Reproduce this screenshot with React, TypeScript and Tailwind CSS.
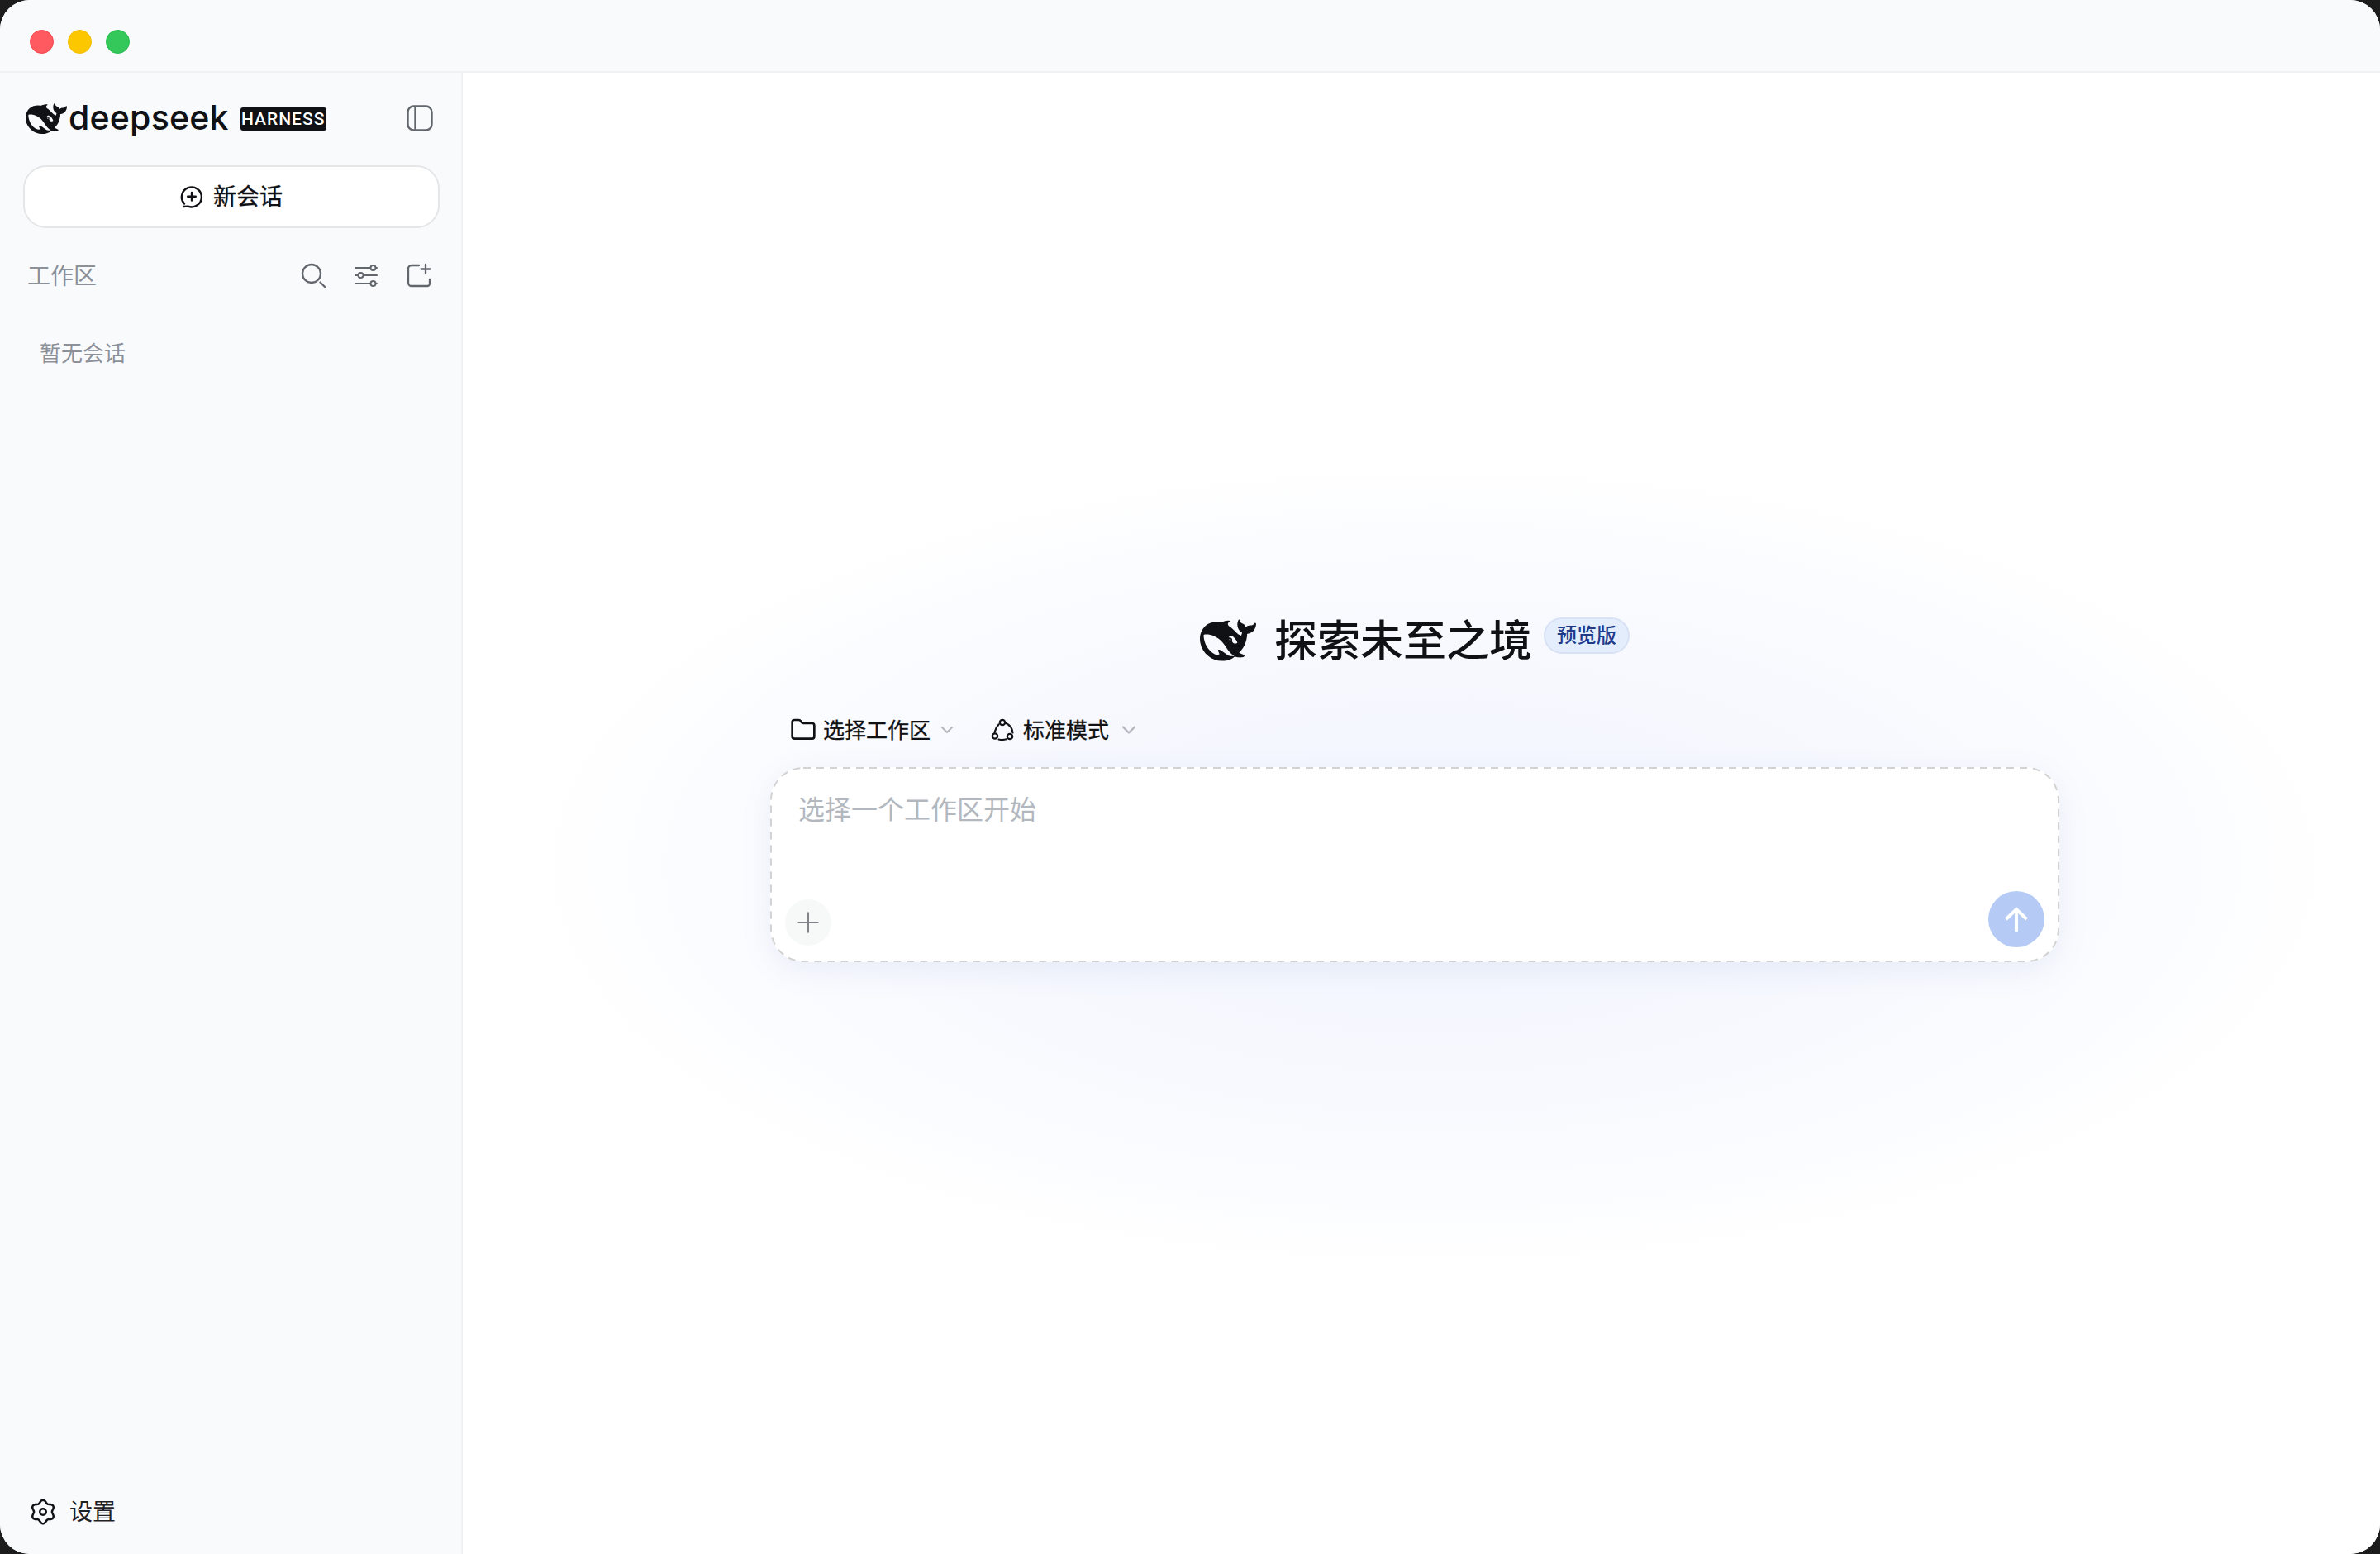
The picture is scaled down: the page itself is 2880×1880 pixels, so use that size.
import { ChevronDown, Folder, Plus } from 'lucide-react';

const CJK = "font-['Inter','Noto_Sans_CJK_SC',sans-serif]";

const Whale = ({ className }: { className: string }) => (
  <svg viewBox="0 0 24 24" className={className} fill="#101114">
    <path d="M23.748 4.482c-.254-.124-.364.113-.512.234-.051.039-.094.09-.137.136-.372.397-.806.657-1.373.626-.829-.046-1.537.214-2.163.848-.133-.782-.575-1.248-1.247-1.548-.352-.156-.708-.311-.955-.65-.172-.241-.219-.51-.305-.774-.055-.16-.11-.323-.293-.35-.2-.031-.278.136-.356.276-.313.572-.434 1.202-.422 1.84.027 1.436.633 2.58 1.838 3.393.137.093.172.187.129.323-.082.28-.18.552-.266.833-.055.179-.137.217-.329.14a5.526 5.526 0 01-1.736-1.18c-.857-.828-1.631-1.742-2.597-2.458a11.365 11.365 0 00-.689-.471c-.985-.957.13-1.743.388-1.836.27-.098.093-.432-.779-.428-.872.004-1.67.295-2.687.684a3.055 3.055 0 01-.465.137 9.597 9.597 0 00-2.883-.102c-1.885.21-3.39 1.102-4.497 2.623C.082 8.606-.231 10.684.152 12.85c.403 2.284 1.569 4.175 3.36 5.653 1.858 1.533 3.997 2.284 6.438 2.14 1.482-.085 3.133-.284 4.994-1.86.47.234.962.327 1.78.397.63.059 1.236-.03 1.705-.128.735-.156.684-.837.419-.961-2.155-1.004-1.682-.595-2.113-.926 1.096-1.296 2.746-2.642 3.392-7.003.05-.347.007-.565 0-.845-.004-.17.035-.237.23-.256a4.173 4.173 0 001.545-.475c1.396-.763 1.96-2.015 2.093-3.517.02-.23-.004-.467-.247-.588zM11.581 18c-2.089-1.642-3.102-2.183-3.52-2.16-.392.024-.321.471-.235.763.09.288.207.486.371.739.114.167.192.416-.113.603-.673.416-1.842-.14-1.897-.167-1.361-.802-2.5-1.86-3.301-3.307-.774-1.393-1.224-2.887-1.298-4.482-.02-.386.093-.522.477-.592a4.696 4.696 0 011.529-.039c2.132.312 3.946 1.265 5.468 2.774.868.86 1.525 1.887 2.202 2.891.72 1.066 1.494 2.082 2.48 2.914.348.292.625.514.891.677-.802.09-2.14.11-3.054-.614zm1-6.44a.306.306 0 01.415-.287.302.302 0 01.2.288.306.306 0 01-.31.307.303.303 0 01-.304-.308zm3.11 1.596c-.2.081-.399.151-.59.16a1.245 1.245 0 01-.798-.254c-.274-.23-.47-.358-.552-.758a1.73 1.73 0 01.016-.588c.07-.327-.008-.537-.239-.727-.187-.156-.426-.199-.688-.199a.559.559 0 01-.254-.078c-.11-.054-.2-.19-.114-.358.028-.054.16-.186.192-.21.356-.202.767-.136 1.146.016.352.144.618.408 1.001.782.391.451.462.576.685.914.176.265.336.537.445.848.067.195-.019.354-.25.452z" />
  </svg>
);

const PanelIcon = () => (
  <svg viewBox="0 0 32 32" className="w-8 h-8" fill="none" stroke="#62666d" strokeWidth="2.4">
    <rect x="1.5" y="1.5" width="29" height="29" rx="7" />
    <path d="M10.5 2v28" />
  </svg>
);

const ChatPlusIcon = () => (
  <svg viewBox="0 0 28 28" className="w-7 h-7" fill="none" stroke="#101114" strokeWidth="2.4" strokeLinecap="round">
    <path d="M5 22.5A12 12 0 1 1 9.5 25.6L4 26" />
    <path d="M14 9v9.500M9.200 13.800h9.600" />
  </svg>
);

const SearchIcon = () => (
  <svg viewBox="0 0 30 30" className="w-[30px] h-[30px]" fill="none" stroke="#62666d" strokeWidth="2.3" strokeLinecap="round">
    <circle cx="13" cy="13" r="11" />
    <path d="M23.500 23.500L29 29" />
  </svg>
);

const SlidersIcon = () => (
  <svg viewBox="0 0 28 28" className="w-7 h-7" fill="none" stroke="#62666d" strokeWidth="2" strokeLinecap="round">
    <path d="M1 5h18M26 5h1M1 14h3M11 14h16M1 24h18M26 24h1" />
    <circle cx="22.500" cy="5" r="3" />
    <circle cx="7.500" cy="14" r="3" />
    <circle cx="22.500" cy="24" r="3" />
  </svg>
);

const FolderPlusIcon = () => (
  <svg viewBox="0 0 30 30" className="w-[30px] h-[30px]" fill="none" stroke="#62666d" strokeWidth="2.3" strokeLinecap="round">
    <path d="M15 3H6a4 4 0 0 0-4 4v17a4 4 0 0 0 4 4h19a3 3 0 0 0 3-3v-5" />
    <path d="M23 2v11M17.500 7.500h11" />
  </svg>
);

const ModeIcon = () => (
  <svg viewBox="0 0 30 30" className="w-[30px] h-[30px]" fill="none" stroke="#101114" strokeWidth="2.2" strokeLinecap="round">
    <circle cx="14" cy="6" r="3.200" />
    <circle cx="5" cy="22.500" r="3.200" />
    <circle cx="23" cy="23" r="3.200" />
    <path d="M9.500 8.500C7 11 5.500 14 4.500 18M17.500 6.500c4.500 2 8.500 6 9 12M9.500 26.500c3 .8 6 .8 9.500-.2" />
  </svg>
);

// six soft lobes, top lobe pointing up
const gearPath =
  Array.from({ length: 72 }, (_, i) => {
    const a = (i / 72) * Math.PI * 2;
    const r = 12.6 + 1.7 * Math.cos(6 * a);
    return `${i === 0 ? 'M' : 'L'}${(16 + r * Math.sin(a)).toFixed(2)} ${(16 - r * Math.cos(a)).toFixed(2)}`;
  }).join(' ') + 'Z';

const GearIcon = () => (
  <svg viewBox="0 0 32 32" className="w-8 h-8" fill="none" stroke="#101114" strokeWidth="2.5" strokeLinejoin="round">
    <path d={gearPath} />
    <circle cx="16" cy="16" r="3.800" />
  </svg>
);

export default function App() {
  return (
    <div className={`${CJK} w-full h-screen bg-[#1c1c1c] overflow-hidden`}>
      <div className="h-full bg-white rounded-[36px] overflow-hidden flex flex-col">
        {/* title bar */}
        <div className="h-[88px] shrink-0 bg-[#f9fafc] border-b-2 border-[#f0f1f3] flex items-start gap-[17px] pl-9 pt-9">
          <div className="w-[29px] h-[29px] rounded-full bg-[#ff5a5f] border border-[#f0434a]" />
          <div className="w-[29px] h-[29px] rounded-full bg-[#fdc700] border border-[#f0bc00]" />
          <div className="w-[29px] h-[29px] rounded-full bg-[#34c85a] border border-[#22b84a]" />
        </div>

        <div className="flex-1 flex min-h-0">
          {/* sidebar */}
          <aside className="w-[560px] shrink-0 bg-[#f9fafc] border-r-2 border-[#f0f1f3] flex flex-col pl-7 pr-[26px]">
            <div className="flex items-center justify-between h-[62px] mt-[24px] pl-[3px] pr-[8px]">
              <div className="flex items-center pt-[2px]">
                <Whale className="w-[50px] h-[50px]" />
                <span className="ml-[2px] text-[41px] leading-none font-medium tracking-[0.2px] text-[#101114] font-['Inter',sans-serif] -mt-[4px]">deepseek</span>
                <span className="ml-[14px] h-[28px] w-[104px] bg-[#101114] rounded-[3px] text-white text-[21px] leading-[28px] text-center font-medium tracking-[1px] font-['Roboto',sans-serif]">HARNESS</span>
              </div>
              <PanelIcon />
            </div>

            <button className="mt-[26px] h-[76px] rounded-[28px] bg-white border-2 border-[#e5e6e8] flex items-center justify-center gap-[12px] text-[28px] text-[#101114] [-webkit-text-stroke:0.4px_#101114]">
              <ChatPlusIcon />
              新会话
            </button>

            <div className="mt-[35px] h-[46px] flex items-center justify-between pl-[5px] pr-[10px]">
              <span className="text-[28px] text-[#8b9099]">工作区</span>
              <div className="flex items-center gap-[35px] -mt-[2px]">
                <SearchIcon />
                <SlidersIcon />
                <FolderPlusIcon />
              </div>
            </div>

            <div className="mt-[53px] pl-[20px] text-[26px] leading-[36px] text-[#8b9099]">暂无会话</div>

            <div className="mt-auto mb-[31px] flex items-center gap-[16px] pl-[8px] text-[28px] leading-[40px] text-[#1f2125]">
              <GearIcon />
              设置
            </div>
          </aside>

          {/* main */}
          <main className="relative flex-1 bg-white flex flex-col items-center pr-4 pt-[659px]">
            <div className="absolute left-[100px] top-[480px] w-[2150px] h-[960px] bg-[radial-gradient(ellipse_at_center,#f2f6fe_0%,#f6f8fe_35%,#fbfcff_58%,#ffffff_72%)]" />

            <div className="relative flex items-center h-[56px]">
              <Whale className="w-[68px] h-[68px]" />
              <h1 className="ml-[22px] pt-[2px] text-[52px] leading-[56px] font-medium text-[#101114]">探索未至之境</h1>
              <span className="ml-[14px] -mt-[13px] h-[44px] w-[104px] rounded-full bg-[#e4edfc] border-2 border-[#d8e2f5] text-[24px] leading-[40px] text-center font-medium text-[#1e3a8a]">预览版</span>
            </div>

            <div className="relative w-[1560px] mt-[50px] h-[60px] pl-[24px] flex items-center text-[26px] text-[#101114] [-webkit-text-stroke:0.3px_#101114]">
              <Folder className="w-[32px] h-[32px]" strokeWidth={2} />
              <span className="ml-[8px]">选择工作区</span>
              <ChevronDown className="ml-[8px] w-6 h-6 text-[#b3b7bd]" strokeWidth={2} />
              <div className="ml-[41px]"><ModeIcon /></div>
              <span className="ml-[9px]">标准模式</span>
              <ChevronDown className="ml-[10px] w-7 h-7 text-[#b3b7bd]" strokeWidth={2} />
            </div>

            <div className="relative w-[1560px] h-[236px] mt-[15px] rounded-[40px] bg-white shadow-[0_10px_36px_rgba(90,120,190,0.10)] flex flex-col p-[18px] pt-[28px]">
              {/* dash length of the card edge is longer than a css dashed border gives */}
              <svg className="absolute inset-0 w-full h-full" fill="none">
                <rect x="1" y="1" width="1558" height="234" rx="39" stroke="#d2d2d2" strokeWidth="2" strokeDasharray="9 7" />
              </svg>
              <div className="relative pl-[16px] text-[32px] leading-[48px] text-[#b3b8bf]">选择一个工作区开始</div>
              <div className="relative mt-auto flex items-end justify-between">
                <div className="w-14 h-14 mb-[2px] rounded-full bg-[#f7f8f8] flex items-center justify-center">
                  <Plus className="w-10 h-10 text-[#80848a]" strokeWidth={1.2} />
                </div>
                <div className="w-[68px] h-[68px] rounded-full bg-[#b5caf5] flex items-center justify-center">
                  <svg viewBox="0 0 28 30" className="w-[28px] h-[30px]" fill="none" stroke="#ffffff" strokeWidth="4">
                    <path d="M14 30V3M1.500 15L14 3l12.500 12" />
                  </svg>
                </div>
              </div>
            </div>
          </main>
        </div>
      </div>
    </div>
  );
}
